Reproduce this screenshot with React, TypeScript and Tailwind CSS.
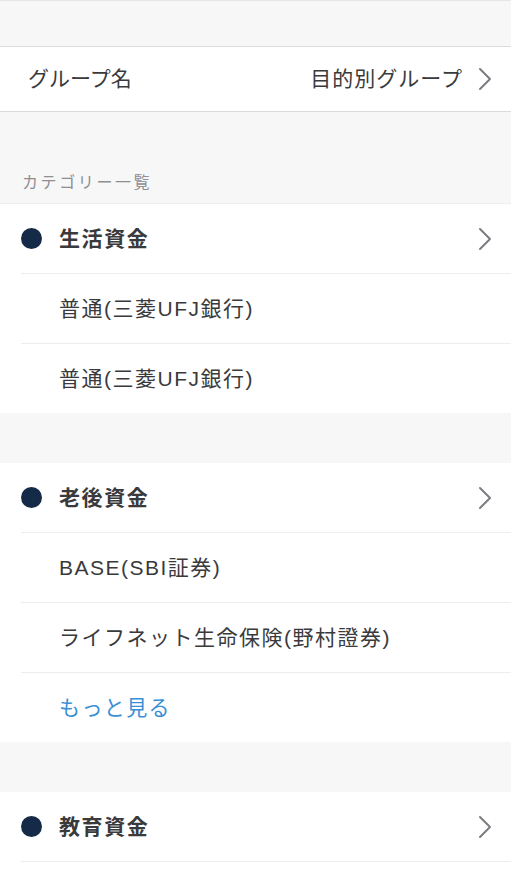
import React from "react";

const font = { fontFamily: '"Liberation Sans", "Noto Sans CJK JP", sans-serif' };

const Chevron = () => (
  <svg width="14" height="24" viewBox="0 0 14 24" fill="none" className="shrink-0">
    <path d="M2 2l10 10-10 10" stroke="#7c7d82" strokeWidth="2" strokeLinecap="round" strokeLinejoin="round" />
  </svg>
);

const sections = [
  { name: "生活資金", items: ["普通(三菱UFJ銀行)", "普通(三菱UFJ銀行)"], more: false },
  { name: "老後資金", items: ["BASE(SBI証券)", "ライフネット生命保険(野村證券)"], more: true },
  { name: "教育資金", items: [], more: false },
];

const Section = ({ name, items, more }: { name: string; items: string[]; more: boolean }) => (
  <div className="bg-white">
    <div className="h-[69px] flex items-center pl-[21px] pr-[19px]">
      <span className="w-[21px] h-[21px] rounded-full bg-[#152a47] shrink-0" />
      <span className="ml-[17px] text-[21px] tracking-[1.6px] font-bold text-[#3a3a3c] flex-1">{name}</span>
      <Chevron />
    </div>
    {items.map((item, i) => (
      <div key={i} className="ml-[21px] border-t border-[#ededed] h-[70px] flex items-center pl-[38px] text-[21px] tracking-[1.5px] text-[#3a3a3c]">
        {item}
      </div>
    ))}
    {more && (
      <div className="ml-[21px] border-t border-[#ededed] h-[70px] flex items-center pl-[38px] text-[21px] tracking-[1.4px] text-[#3a8fd6]">
        もっと見る
      </div>
    )}
    {items.length === 0 && <div className="ml-[21px] border-t border-[#ededed] h-[10px]" />}
  </div>
);

export default function App() {
  return (
    <div style={font} className="w-[511px] h-[869px] overflow-hidden bg-[#f7f7f7]">
      <div className="h-[46px] border-t border-[#e6e6e6]" />
      <div className="h-[66px] bg-white border-y border-[#dcdcdc] flex items-center pl-[28px] pr-[19px]">
        <span className="flex-1 text-[21px] text-[#3a3a3c]">グループ名</span>
        <span className="text-[21px] tracking-[1px] text-[#3a3a3c] mr-[15px]">目的別グループ</span>
        <Chevron />
      </div>
      <div className="h-[91px] flex items-end pl-[22px] pb-[8px]">
        <span className="text-[16px] tracking-[2.6px] text-[#8e8e93]">カテゴリー一覧</span>
      </div>
      <div className="border-t border-[#efefef]">
        <Section {...sections[0]} />
      </div>
      <div className="h-[50px]" />
      <Section {...sections[1]} />
      <div className="h-[50px]" />
      <Section {...sections[2]} />
    </div>
  );
}
